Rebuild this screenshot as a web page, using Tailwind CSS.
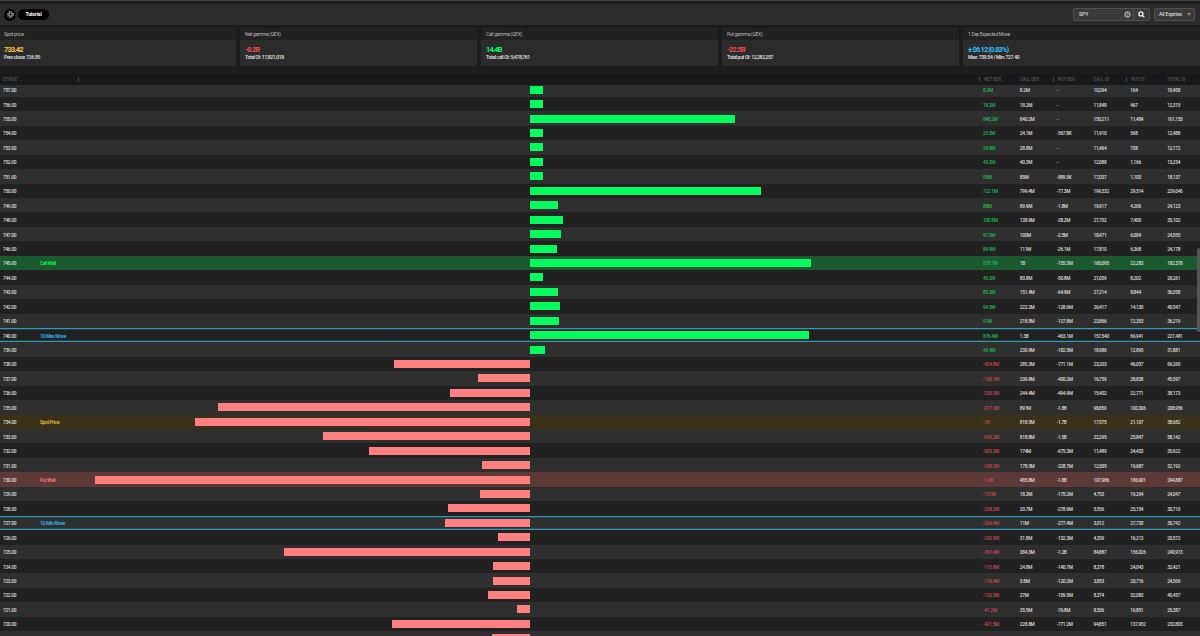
<!doctype html>
<html lang="en">

<head>
    <meta charset="UTF-8" />
    <meta name="viewport" content="width=device-width, initial-scale=1.0" />
    <script src="https://cdn.jsdelivr.net/npm/@tailwindcss/browser@4"></script>
</head>

<body class="bg-[#1c1c1c]">
    <div class="relative w-[1200px] h-[636px] overflow-hidden bg-[#1c1c1c] font-['Roboto',sans-serif]">

        <div class="h-[1px] bg-[#444444]"></div>
        <div class="h-[3px] bg-[#1c1c1c]"></div>

        <!-- top bar -->
        <div class="h-[21px] bg-[#2b2b2b] flex items-center pl-[4px] pr-[5px]">
            <div class="w-[12px] h-[12px] rounded-full bg-black flex items-center justify-center">
                <svg class="w-[7px] h-[7px]" viewBox="0 0 24 24" fill="none" stroke="#aaaaaa">
                    <circle cx="12" cy="12" r="6" stroke-width="4"></circle>
                    <circle cx="12" cy="12" r="10" stroke-width="4" stroke-dasharray="4 3.85"></circle>
                </svg>
            </div>
            <div class="ml-[2px] w-[31px] h-[11px] rounded-full bg-black flex items-center justify-center text-[5px] font-bold tracking-[-0.15px] text-white">Tutorial</div>
            <div class="ml-auto flex items-center h-[13px] w-[77px] bg-[#3a3a3a] border border-[#505050] rounded-[2px]">
                <div class="flex-1 flex items-center pl-[5px] pr-[2px] text-[5px] font-medium text-[#dddddd]">
                    SPY
                    <svg class="ml-auto w-[7px] h-[7px]" viewBox="0 0 24 24">
                        <circle cx="12" cy="12" r="11" fill="#999999"></circle>
                        <path d="M7 7l10 10M17 7L7 17" stroke="#333333" stroke-width="3"></path>
                    </svg>
                </div>
                <div class="w-[16px] h-full border-l border-[#505050] flex items-center justify-center">
                    <svg class="w-[7px] h-[7px]" viewBox="0 0 24 24" fill="none" stroke="#ffffff" stroke-width="4">
                        <circle cx="10" cy="10" r="7"></circle>
                        <path d="M15 15l7 7"></path>
                    </svg>
                </div>
            </div>
            <div class="ml-[4px] w-[41px] h-[13px] bg-[#3a3a3a] border border-[#505050] rounded-[2px] flex items-center pl-[4px] pr-[3px] text-[5px] font-medium tracking-[-0.15px] whitespace-nowrap text-[#dddddd]">
                All Expiries
                <svg class="ml-auto w-[4px] h-[3px]" viewBox="0 0 8 6"><path d="M0 0h8L4 6z" fill="#b08d3c"></path></svg>
            </div>
        </div>

        <!-- stat cards -->
        <div class="mt-[3px] h-[38px] grid grid-cols-[236px_237px_237px_237px_237px] gap-x-[4px]">
            <div class="flex flex-col bg-[#2b2b2b]">
                <div class="h-[12px] bg-[#212121] pl-[4px] pt-[2px] flex items-center text-[5px] tracking-[-0.3px] text-[#b5b5b5]">Spot price</div>
                <div class="pl-[4px] pt-[5px] text-[7.5px] leading-[9px] font-bold tracking-[-0.85px] text-[#f5c542]">733.42</div>
                <div class="pl-[4px] pt-[0px] text-[5px] leading-[6px] font-medium tracking-[-0.3px] text-[#e5e5e5]">Prev close: 726.85</div>
            </div>
            <div class="flex flex-col bg-[#2b2b2b]">
                <div class="h-[12px] bg-[#212121] pl-[5px] pt-[2px] flex items-center text-[5px] tracking-[-0.3px] text-[#b5b5b5]">Net gamma (GEX)</div>
                <div class="pl-[5px] pt-[5px] text-[7.5px] leading-[9px] font-bold tracking-[-0.85px] text-[#f04a4a]">-8.2B</div>
                <div class="pl-[5px] pt-[0px] text-[5px] leading-[6px] font-medium tracking-[-0.3px] text-[#e5e5e5]">Total OI: 17,821,018</div>
            </div>
            <div class="flex flex-col bg-[#2b2b2b]">
                <div class="h-[12px] bg-[#212121] pl-[5px] pt-[2px] flex items-center text-[5px] tracking-[-0.3px] text-[#b5b5b5]">Call gamma (GEX)</div>
                <div class="pl-[5px] pt-[5px] text-[7.5px] leading-[9px] font-bold tracking-[-0.85px] text-[#05fc5e]">14.4B</div>
                <div class="pl-[5px] pt-[0px] text-[5px] leading-[6px] font-medium tracking-[-0.3px] text-[#e5e5e5]">Total call OI: 5,478,761</div>
            </div>
            <div class="flex flex-col bg-[#2b2b2b]">
                <div class="h-[12px] bg-[#212121] pl-[5px] pt-[2px] flex items-center text-[5px] tracking-[-0.3px] text-[#b5b5b5]">Put gamma (GEX)</div>
                <div class="pl-[5px] pt-[5px] text-[7.5px] leading-[9px] font-bold tracking-[-0.85px] text-[#f04a4a]">-22.5B</div>
                <div class="pl-[5px] pt-[0px] text-[5px] leading-[6px] font-medium tracking-[-0.3px] text-[#e5e5e5]">Total put OI: 12,282,257</div>
            </div>
            <div class="flex flex-col bg-[#2b2b2b]">
                <div class="h-[12px] bg-[#212121] pl-[5px] pt-[2px] flex items-center text-[5px] tracking-[-0.3px] text-[#b5b5b5]">1 Day Expected Move</div>
                <div class="pl-[5px] pt-[5px] text-[7.5px] leading-[9px] font-bold tracking-[-0.85px] text-[#38bdf8]">± $6.12 (0.83%)</div>
                <div class="pl-[5px] pt-[0px] text-[5px] leading-[6px] font-medium tracking-[-0.3px] text-[#e5e5e5]">Max: 739.54 / Min: 727.40</div>
            </div>
        </div>

        <!-- table header -->
        <div class="mt-[8px] h-[11px] bg-[#18191b] flex items-center text-[4.6px] tracking-[-0.2px] leading-[5px] font-medium text-[#555555] relative z-10">
            <div class="w-[79px] h-[5px] pl-[3px] flex items-center border-r border-[#444444]">STRIKE <span class="ml-[2px]">⌄</span></div>
            <div class="w-[900px]"></div>
            <div class="flex-1 grid grid-cols-6">
                <div class="pl-[4px] border-l border-[#444444]">NET GEX</div>
                <div class="pl-[4px]">CALL GEX</div>
                <div class="pl-[4px] border-l border-[#444444]">PUT GEX</div>
                <div class="pl-[4px]">CALL OI</div>
                <div class="pl-[4px] border-l border-[#444444]">PUT OI</div>
                <div class="pl-[4px]">TOTAL OI</div>
            </div>
        </div>

        <div class="mt-[-2.5px]" id="rows"></div>

        <!-- scrollbar thumb -->
        <div class="absolute right-0 top-[248px] w-[3px] h-[84px] bg-[#555555] rounded-full z-20"></div>
    </div>

    <script>
        // strike, bar width (negative goes left), net, call gex, put gex, call oi, put oi, total oi, tag
        const data = [
            ["757.00", 13, "8.2M", "8.2M", "-", "10,294", "164", "10,458"],
            ["756.00", 13, "18.2M", "18.2M", "-", "11,848", "467", "12,315"],
            ["755.00", 205, "840.2M", "840.2M", "-", "150,211", "11,484", "161,155"],
            ["754.00", 13, "23.5M", "24.1M", "-567.8K", "11,910", "568", "12,488"],
            ["753.00", 13, "28.8M", "28.8M", "-", "11,464", "708", "12,172"],
            ["752.00", 13, "40.3M", "40.3M", "-", "12,088", "1,166", "13,254"],
            ["751.00", 13, "85M", "85M", "-889.5K", "17,037", "1,100", "18,137"],
            ["750.00", 231, "722.1M", "799.4M", "-77.3M", "199,532", "29,514", "229,046"],
            ["749.00", 28, "88M", "89.9M", "-1.8M", "19,917", "4,206", "24,123"],
            ["748.00", 33, "100.8M", "138.9M", "-38.2M", "27,702", "7,400", "35,102"],
            ["747.00", 31, "97.5M", "100M", "-2.5M", "18,471", "6,084", "24,555"],
            ["746.00", 27, "84.9M", "111M", "-26.1M", "17,810", "6,368", "24,178"],
            ["745.00", 281, "878.7M", "1B", "-155.3M", "160,095", "22,283", "182,378", "call"],
            ["744.00", 13, "40.2M", "80.8M", "-50.8M", "21,059", "8,202", "29,261"],
            ["743.00", 28, "85.3M", "151.4M", "-64.9M", "27,214", "8,844", "36,058"],
            ["742.00", 30, "94.5M", "222.2M", "-128.6M", "26,417", "14,130", "40,547"],
            ["741.00", 29, "91M", "218.8M", "-127.8M", "23,866", "12,353", "36,219"],
            ["740.00", 279, "876.4M", "1.3B", "-463.1M", "157,540", "69,941", "227,481", "max"],
            ["739.00", 15, "48.4M", "230.9M", "-182.5M", "18,986", "12,895", "31,881"],
            ["738.00", -136, "-424.8M", "285.3M", "-771.1M", "23,203", "46,057", "69,260"],
            ["737.00", -52, "-160.1M", "239.8M", "-400.2M", "16,759", "28,838", "45,597"],
            ["736.00", -80, "-250.5M", "244.4M", "-494.9M", "15,402", "22,771", "38,173"],
            ["735.00", -312, "-977.2M", "891M", "-1.8B", "98,850", "100,306", "208,956"],
            ["734.00", -335, "-1B", "818.5M", "-1.7B", "17,575", "21,107", "38,682", "spot"],
            ["733.00", -207, "-643.2M", "818.8M", "-1.5B", "22,295", "25,847", "58,142"],
            ["732.00", -161, "-503.3M", "174M", "-675.3M", "11,489", "24,433", "35,922"],
            ["731.00", -48, "-150.2M", "178.5M", "-328.7M", "12,505", "19,687", "32,192"],
            ["730.00", -435, "-1.4B", "485.8M", "-1.8B", "107,986", "186,901", "294,887", "put"],
            ["729.00", -50, "-157M", "18.3M", "-175.2M", "4,753", "19,294", "24,047"],
            ["728.00", -82, "-258.2M", "20.7M", "-278.9M", "5,556", "25,154", "30,710"],
            ["727.00", -85, "-266.4M", "11M", "-277.4M", "3,012", "27,730", "30,742", "min"],
            ["726.00", -32, "-100.5M", "31.8M", "-132.3M", "4,359", "16,213", "20,572"],
            ["725.00", -246, "-767.4M", "384.3M", "-1.2B", "84,887", "156,026", "240,913"],
            ["724.00", -37, "-115.8M", "24.8M", "-140.7M", "8,378", "24,043", "32,421"],
            ["723.00", -37, "-116.4M", "3.8M", "-120.2M", "3,853", "20,716", "24,569"],
            ["722.00", -42, "-132.5M", "27M", "-159.5M", "8,374", "32,083", "40,457"],
            ["721.00", -13, "-41.2M", "35.5M", "-76.8M", "8,536", "16,851", "25,387"],
            ["720.00", -138, "-421.5M", "228.8M", "-771.2M", "94,851", "137,952", "232,803"],
            // only the top of this bar shows above the fold
            ["", -38, "", "", "", "", "", ""]
        ];

        const cyanLines = "shadow-[inset_0_1.3px_0_#2f9bb8,inset_0_-1.3px_0_#2f9bb8]";
        const tags = {
            call: { text: "Call Wall", label: "text-[#05fc5e]", bg: "bg-[#1a5a2e]" },
            put: { text: "Put Wall", label: "text-[#ff8080]", bg: "bg-[#5d3938]" },
            spot: { text: "Spot Price", label: "text-[#f5c542]", bg: "bg-[#3a3119]" },
            max: { text: "1D Max Move", label: "text-[#38bdf8]", bg: "bg-[#212121] " + cyanLines },
            min: { text: "1D Min Move", label: "text-[#38bdf8]", bg: "bg-[#2f2f2f] " + cyanLines }
        };

        document.getElementById("rows").innerHTML = data.map((d, i) => {
            const tag = tags[d[8]];
            const bg = tag ? tag.bg : (i % 2 === 0 ? "bg-[#2f2f2f]" : "bg-[#212121]");
            const up = d[1] > 0;
            const bar = `<div class="h-[8px] ${up ? "bg-[#05fc5e]" : "bg-[#ff8080]"}" style="width:${Math.abs(d[1])}px"></div>`;
            return `<div class="box-border h-[14.45px] flex items-center text-[4.8px] tracking-[-0.3px] font-medium text-[#dddddd] ${bg}">
                <div class="w-[40px] pl-[3px] pt-[2px]">${d[0]}</div>
                <div class="w-[39px] pt-[2px] ${tag ? tag.label : ""}">${tag ? tag.text : ""}</div>
                <div class="w-[900px] grid grid-cols-2 pl-[2px]">
                    <div class="flex justify-end">${up ? "" : bar}</div>
                    <div class="flex justify-start">${up ? bar : ""}</div>
                </div>
                <div class="flex-1 grid grid-cols-6 pt-[2px]">
                    <div class="pl-[4px] ${up ? "text-[#1fb84f]" : "text-[#c8484a]"}">${d[2]}</div>
                    <div class="pl-[4px]">${d[3]}</div>
                    <div class="pl-[4px]">${d[4]}</div>
                    <div class="pl-[4px]">${d[5]}</div>
                    <div class="pl-[4px]">${d[6]}</div>
                    <div class="pl-[4px]">${d[7]}</div>
                </div>
            </div>`;
        }).join("");
    </script>
</body>

</html>
